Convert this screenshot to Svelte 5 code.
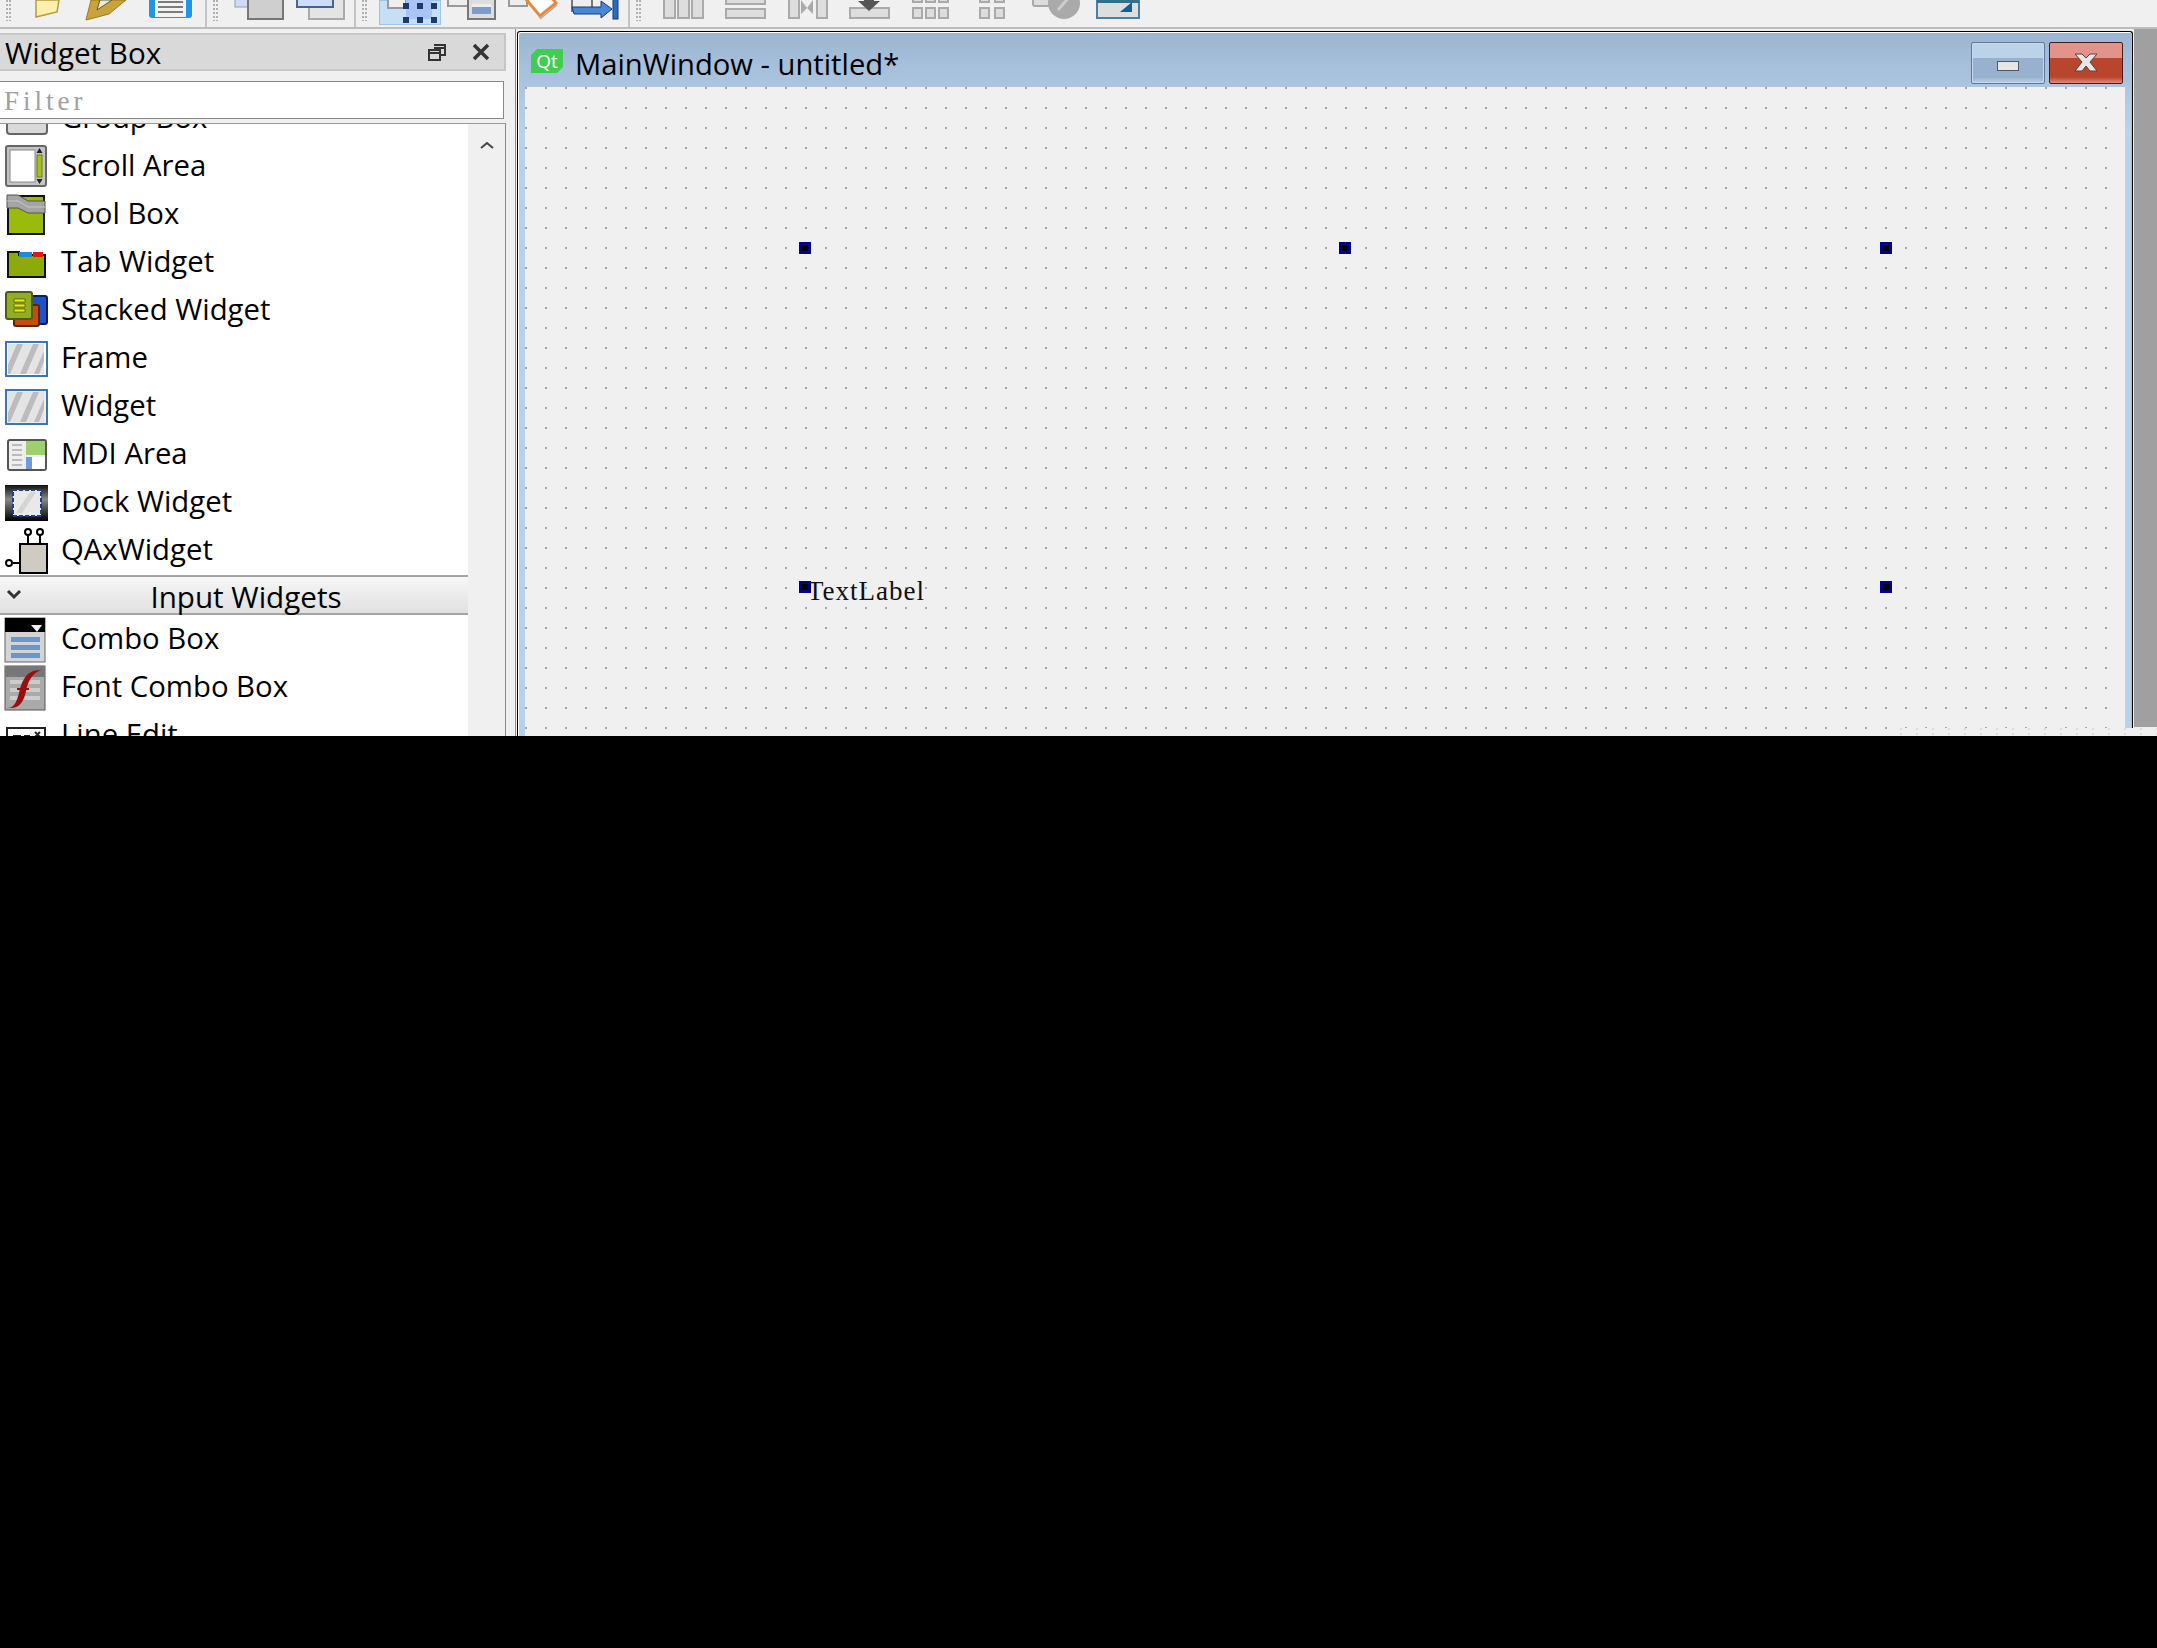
<script>
    const stripes = `<rect x="4" y="9" width="36" height="30" fill="#e4e4e4"/><path d="M4 30 13 9h6L6 39H4zM16 39 29 9h6L22 39zM30 39 40 16v10l-5 13z" fill="#bcbcbc"/>`;

    const icons = {
        group: `<rect x="3" y="14" width="40" height="25" rx="3" fill="#d9d9d9" stroke="#666" stroke-width="2"/>`,
        scroll: `<rect x="2" y="3" width="40" height="40" rx="2" fill="#c4c4c4" stroke="#666" stroke-width="2"/><rect x="6" y="7" width="25" height="32" fill="#fff" stroke="#888"/><rect x="33" y="12" width="5" height="22" fill="#a6c21a" stroke="#687c10"/><path d="M35.500 5 38.500 10h-6zM35.500 41 32.500 36h6z" fill="#222"/>`,
        tool: `<rect x="4" y="5" width="36" height="38" fill="#9aba0c" stroke="#111" stroke-width="2"/><path d="M3 4h11l10 6h17v12H24l-10-5H3z" fill="#a4a4a4" stroke="#555"/><path d="M3 10h11l10 6h17" fill="none" stroke="#c8c8c8"/>`,
        tab: `<path d="M4 13h11v3h26v22H4z" fill="#8cab0a" stroke="#111" stroke-width="2"/><rect x="15" y="13" width="13" height="5" fill="#1d8ad8"/><rect x="29" y="13" width="10" height="5" fill="#e01818"/>`,
        stacked: `<rect x="26" y="9" width="17" height="28" rx="2" fill="#1f52c8" stroke="#0b1f52" stroke-width="2"/><rect x="10" y="18" width="25" height="21" rx="2" fill="#c84a10" stroke="#5f2405" stroke-width="2"/><rect x="2" y="5" width="26" height="27" rx="2" fill="#92ad22" stroke="#4d5c10" stroke-width="2"/><path d="M10 12h11v3H10zm0 5h11v3H10zm0 5h11v3H10z" fill="#e4f000" stroke="#333" stroke-width=".6"/>`,
        frame: `<rect x="2" y="7" width="41" height="34" fill="#fff" stroke="#3b76b4" stroke-width="2"/>` + stripes,
        widget: `<rect x="2" y="7" width="41" height="34" fill="#eee" stroke="#3b76b4" stroke-width="2"/>` + stripes,
        mdi: `<rect x="4" y="9" width="38" height="30" rx="2" fill="#eee" stroke="#555" stroke-width="2"/><rect x="22" y="10" width="19" height="14" fill="#9fd06e"/><path d="M22 26h19v12H22z" fill="#fff"/><path d="M22 26h6v12h-6zm0 4h19" fill="#6f9ce0"/><path d="M8 14h10M8 19h10M8 24h10M8 29h10M8 34h10" stroke="#bbb" stroke-width="2"/>`,
        dock: `<defs><linearGradient id="dk" x1="0" y1="0" x2="0" y2="1"><stop offset="0" stop-color="#111"/><stop offset=".4" stop-color="#888"/><stop offset="1" stop-color="#000"/></linearGradient></defs><rect x="1" y="6" width="43" height="36" fill="url(#dk)"/><rect x="9" y="11" width="28" height="26" fill="#e9e9e9" stroke="#1b3f95" stroke-width="2" stroke-dasharray="4 2"/><path d="M12 34 26 13h6L18 34z" fill="#d4d4d4"/>`,
        qax: `<rect x="16" y="17" width="27" height="29" fill="#cfcbc2" stroke="#000" stroke-width="2"/><path d="M24 17V8M36 17V8M16 36H9" stroke="#000" stroke-width="2"/><circle cx="24" cy="5" r="3" fill="#fff" stroke="#000" stroke-width="2"/><circle cx="36" cy="5" r="3" fill="#fff" stroke="#000" stroke-width="2"/><circle cx="5" cy="36" r="3" fill="#fff" stroke="#000" stroke-width="2"/>`,
        combo: `<rect x="1" y="2" width="40" height="44" fill="#d4d4d4" stroke="#666"/><rect x="1" y="2" width="40" height="14" fill="#000"/><path d="M27 9h11l-5 7z" fill="#eee"/><rect x="7" y="21" width="29" height="5" fill="#6b96c8"/><rect x="7" y="29" width="29" height="5" fill="#6b96c8"/><rect x="7" y="37" width="29" height="5" fill="#6b96c8"/>`,
        font: `<rect x="1" y="2" width="40" height="44" fill="#aaa" stroke="#555"/><rect x="1" y="2" width="40" height="11" fill="#777"/><path d="M6 18h30M6 26h30M6 34h30" stroke="#ccc" stroke-width="4"/><path d="M3 43c6 2 9-3 12-14 3-12 7-23 21-23l3-1c-11 4-15 12-17 22-2 11-8 20-19 16z" fill="#970f0f"/><path d="M13 25h12" stroke="#970f0f" stroke-width="2"/>`,
        line: `<rect x="3" y="16" width="38" height="30" fill="#fff" stroke="#222" stroke-width="2"/><path d="M9 24h8M20 24h6M31 20l5 5m0-5-5 5" stroke="#222" stroke-width="2"/>`,
    };

    const tool = {
        newfile: `<path d="M20 0h23l-2 12-21 5z" fill="#fdf0ae" stroke="#b59a3c" stroke-width="1.500"/>`,
        open: `<path d="M8 20 13 0h35L31 14z" fill="#c9a33a" stroke="#9a7a20"/><path d="M19 10 22 0h12z" fill="#f3ecc8" stroke="#555"/>`,
        save: `<rect x="9" y="-6" width="43" height="24" rx="3" fill="#1e95e6"/><rect x="15" y="-6" width="31" height="23" fill="#f3f3f3"/><path d="M18 2h25M18 7h25M18 12h25" stroke="#555" stroke-width="1.500"/>`,
        back: `<rect x="7" y="-8" width="16" height="15" fill="#cfdcf5" stroke="#8aa0c8"/><rect x="20" y="-6" width="35" height="25" fill="#cfcfcf" stroke="#777" stroke-width="2"/>`,
        front: `<rect x="19" y="-6" width="35" height="25" fill="#e4e4e4" stroke="#aaa" stroke-width="2"/><rect x="7" y="-8" width="36" height="15" fill="#cfdcf8" stroke="#41669a" stroke-width="2"/>`,
        edit: `<rect x="9" y="-6" width="18" height="14" fill="#eee" stroke="#999" stroke-width="2"/><rect x="27" y="-6" width="26" height="25" fill="#a9c4f5"/><path d="M24 3h6v6h-6zM38 3h6v6h-6zM52 3h6v6h-6zM24 17h6v6h-6zM38 17h6v6h-6zM52 17h6v6h-6z" fill="#1b3a70"/>`,
        signal: `<rect x="7" y="-6" width="20" height="12" fill="#eee" stroke="#999" stroke-width="2"/><rect x="27" y="-6" width="27" height="25" fill="#ddd" stroke="#777" stroke-width="2"/><rect x="31" y="4" width="19" height="10" fill="#7e9cc8"/><rect x="31" y="4" width="19" height="3" fill="#eee"/>`,
        buddy: `<rect x="6" y="-6" width="18" height="12" fill="#eee" stroke="#999" stroke-width="2"/><path d="M22 -2 37 16 53 3 46 -6z" fill="#fff" stroke="#e58a3c" stroke-width="3"/><path d="M37 19 54 5" stroke="#aaa" stroke-width="1.500"/>`,
        tab: `<rect x="7" y="-6" width="20" height="17" fill="#eee" stroke="#777" stroke-width="2"/><path d="M7 7h29V1l11 8-11 9v-4H9z" fill="#4a86d6" stroke="#1b3a70"/><rect x="48" y="-4" width="5" height="23" fill="#2a6cc0" stroke="#1b3a70"/>`,
        hbox: `<path d="M12-6h11v24H12zM26-6h11v24H26zM40-6h11v24H40z" fill="#ddd" stroke="#aaa" stroke-width="2"/>`,
        vbox: `<rect x="12" y="-8" width="39" height="12" fill="#ddd" stroke="#aaa" stroke-width="2"/><rect x="12" y="9" width="39" height="9" fill="#ddd" stroke="#aaa" stroke-width="2"/>`,
        hsplit: `<path d="M13-6h10v24H13zM41-6h10v24H41z" fill="#ddd" stroke="#aaa" stroke-width="2"/><path d="M25 0l6 8 6-8v14l-6-6-6 6z" fill="#aaa"/>`,
        vsplit: `<rect x="12" y="8" width="39" height="10" fill="#ddd" stroke="#aaa" stroke-width="2"/><path d="M26-2h10v3h6l-11 10-11-10h6z" fill="#555"/>`,
        form: `<path d="M13-6h9v8h-9zM26-6h9v8h-9zM39-6h9v8h-9zM13 8h9v10h-9zM26 8h9v10h-9zM39 8h9v10h-9z" fill="#ddd" stroke="#aaa" stroke-width="2"/>`,
        grid: `<path d="M18-6h9v8h-9zM33-6h9v8h-9zM18 8h9v10h-9zM33 8h9v10h-9z" fill="#ddd" stroke="#aaa" stroke-width="2"/>`,
        brk: `<rect x="9" y="-6" width="24" height="12" rx="2" fill="#ddd" stroke="#aaa" stroke-width="2"/><circle cx="40" cy="3" r="16" fill="#aaa"/><path d="M34 10 46-4" stroke="#ccc" stroke-width="3"/>`,
        adjust: `<rect x="11" y="-8" width="42" height="26" fill="#ddd" stroke="#4a80a8" stroke-width="2"/><rect x="11" y="-8" width="42" height="11" fill="#2f6f92"/><path d="M34 12l12-10v10z" fill="#175f92"/>`,
    };

    const groups = [
        { pad: 16, width: 207, items: ["newfile", "open", "save"] },
        { pad: 21, width: 149, items: ["back", "front"] },
        { pad: 23, width: 274, active: "edit", items: ["edit", "signal", "buddy", "tab"] },
        { pad: 22, width: 0, items: ["hbox", "vbox", "hsplit", "vsplit", "form", "grid", "brk", "adjust"] },
    ];

    const beforeInputs = [
        ["group", "Group Box"],
        ["scroll", "Scroll Area"],
        ["tool", "Tool Box"],
        ["tab", "Tab Widget"],
        ["stacked", "Stacked Widget"],
        ["frame", "Frame"],
        ["widget", "Widget"],
        ["mdi", "MDI Area"],
        ["dock", "Dock Widget"],
        ["qax", "QAxWidget"],
    ];
    const inputs = [
        ["combo", "Combo Box"],
        ["font", "Font Combo Box"],
        ["line", "Line Edit"],
    ];

    // selection handles around the label, relative to the form
    const handles = [
        [274, 155], [814, 155], [1355, 155],
        [274, 494], [1355, 494],
    ];
</script>

<div class="screen">
    <div class="toolbar">
        {#each groups as g}
            <div class="tgroup" class:last={!g.width} style="width:{g.width ? g.width + 'px' : 'auto'};padding-left:{g.pad}px">
                <span class="grip"></span>
                {#each g.items as name}
                    <span class="slot" class:active={g.active === name}>
                        <svg width="62" height="27" viewBox="0 0 62 27">{@html tool[name]}</svg>
                    </span>
                {/each}
            </div>
        {/each}
    </div>

    <div class="main">
        <div class="dock">
            <div class="dock-title">
                <span class="dock-name">Widget Box</span>
                <svg class="dock-btn" width="20" height="20" viewBox="0 0 20 20">
                    <path d="M7 3h11v10h-4M2 8h11v10H2zM2 11h11M7 6h11" fill="none" stroke="#333" stroke-width="2" />
                </svg>
                <svg class="dock-btn close" width="20" height="20" viewBox="0 0 20 20">
                    <path d="M3 3 17 17M17 3 3 17" stroke="#333" stroke-width="3.500" />
                </svg>
            </div>
            <div class="filter">Filter</div>
            <div class="list-wrap">
                <div class="list">
                    <div class="scrolled">
                        {#each beforeInputs as [icon, label]}
                            <div class="row">
                                <svg class="ico" width="44" height="48" viewBox="0 0 44 48">{@html icons[icon]}</svg>
                                <span>{label}</span>
                            </div>
                        {/each}
                        <div class="cat">
                            <svg class="chev" width="16" height="12" viewBox="0 0 16 12">
                                <path d="M2 2 8 8 14 2" fill="none" stroke="#333" stroke-width="3" />
                            </svg>
                            <span>Input Widgets</span>
                        </div>
                        {#each inputs as [icon, label]}
                            <div class="row">
                                <svg class="ico" width="44" height="48" viewBox="0 0 44 48">{@html icons[icon]}</svg>
                                <span>{label}</span>
                            </div>
                        {/each}
                    </div>
                </div>
                <div class="vscroll">
                    <svg width="14" height="9" viewBox="0 0 14 9">
                        <path d="M1 7 7 2 13 7" fill="none" stroke="#444" stroke-width="2" />
                    </svg>
                </div>
            </div>
        </div>

        <div class="mdi">
            <div class="window">
                <div class="win-title">
                    <span class="qt">Qt</span>
                    <span class="win-name">MainWindow - untitled*</span>
                    <span class="wbtn min"><i></i></span>
                    <span class="wbtn cls">
                        <svg width="24" height="20" viewBox="0 0 24 20">
                            <path d="M1 1h7l4 4 4-4h7l-7 8 7 9h-7l-4-5-4 5H1l7-9z" fill="#e6e6e6" stroke="#5c4040" />
                        </svg>
                    </span>
                </div>
                <div class="form">
                    {#each handles as [x, y]}
                        <span class="handle" style="left:{x}px;top:{y}px"></span>
                    {/each}
                    <span class="label">TextLabel</span>
                </div>
            </div>
        </div>
    </div>
    <div class="band"></div>
</div>

<style>
    :global(body) {
        background: #000;
    }

    .screen {
        position: relative;
        height: 736px;
        overflow: hidden;
        display: flex;
        flex-direction: column;
        background: #f0f0f0;
        font-family: "Open Sans", "Noto Sans", sans-serif;
        color: #000;
    }

    /* strip of the screen below the window, right hand side only */
    .band {
        position: absolute;
        right: 0;
        bottom: 0;
        width: 257px;
        height: 8px;
        background-color: #f0f0f0;
        background-image: conic-gradient(at 2px 2px, transparent 75%, #dcdcdc 0);
        background-size: 16px 5px;
    }

    .toolbar {
        height: 27px;
        flex: none;
        display: flex;
        border-bottom: 2px solid #bcbcbc;
        overflow: hidden;
    }

    .tgroup {
        position: relative;
        display: flex;
        box-sizing: border-box;
        border-right: 2px solid #c4c4c4;
    }

    .tgroup.last {
        flex: 1;
        border-right: 0;
    }

    .grip {
        position: absolute;
        left: 6px;
        top: 0;
        bottom: 6px;
        width: 6px;
        background-image: radial-gradient(circle at 1px 1px, #b0b0b0 1px, transparent 1.2px);
        background-size: 3px 4px;
    }

    .slot {
        flex: none;
        width: 62px;
        height: 27px;
    }

    .slot svg {
        display: block;
    }

    .slot.active {
        box-sizing: border-box;
        height: 25px;
        background: #c7dff5;
        box-shadow: inset 0 0 0 1px #99c6ec;
    }

    .main {
        flex: 1;
        display: flex;
        min-height: 0;
    }

    .dock {
        width: 506px;
        flex: none;
        padding-top: 4px;
        box-sizing: border-box;
        display: flex;
        flex-direction: column;
    }

    .dock-title {
        height: 38px;
        box-sizing: border-box;
        flex: none;
        display: flex;
        align-items: center;
        background: #d9d9d9;
        border: 2px solid #c6c6c6;
        border-left: 0;
        padding-left: 5px;
        font-size: 29.600px;
    }

    .dock-name {
        flex: 1;
        padding-top: 1px;
    }

    .dock-btn {
        margin-right: 24px;
    }

    .dock-btn.close {
        margin-right: 13px;
    }

    .filter {
        height: 38px;
        box-sizing: border-box;
        flex: none;
        margin: 10px 2px 4px 0;
        padding-left: 4px;
        background: #fff;
        border: 1px solid #8a8a8a;
        border-left: 0;
        color: #a0a0a0;
        font: 27px/38px "Liberation Serif", serif;
        letter-spacing: 4px;
    }

    .list-wrap {
        flex: 1;
        min-height: 0;
        display: flex;
        border-top: 1px solid #9a9a9a;
        border-right: 1px solid #8a8a8a;
    }

    .list {
        width: 468px;
        flex: none;
        background: #fff;
        overflow: hidden;
    }

    .scrolled {
        margin-top: -29px;
    }

    .row {
        height: 48px;
        display: flex;
        align-items: center;
        gap: 13px;
        padding-left: 4px;
        font-size: 29.300px;
        white-space: nowrap;
    }

    .row span {
        padding-bottom: 4px;
    }

    .ico {
        flex: none;
        overflow: visible;
    }

    .cat {
        height: 40px;
        margin-bottom: 1px;
        box-sizing: border-box;
        display: flex;
        align-items: center;
        background: linear-gradient(#f7f7f7, #e0e0e0);
        border-top: 2px solid #a4a4a4;
        border-bottom: 2px solid #a4a4a4;
        font-size: 29.600px;
    }

    .chev {
        flex: none;
        margin: 0 2px 0 6px;
    }

    .cat span {
        flex: 1;
        text-align: center;
        padding-top: 2px;
    }

    .vscroll {
        flex: 1;
        display: flex;
        justify-content: center;
        padding-top: 17px;
    }

    .mdi {
        flex: 1;
        min-width: 0;
        margin-left: 9px;
        border-left: 1px solid #8a8a8a;
        padding-left: 1px;
        background: linear-gradient(#a0a0a0 698px, #f0f0f0 0) no-repeat 1618px 0 / 100% 100%;
        display: flex;
    }

    .window {
        width: 1616px;
        flex: none;
        margin-top: 2px;
        box-sizing: border-box;
        display: flex;
        flex-direction: column;
        border: 1px solid #000;
        border-bottom: 0;
        border-radius: 3px 3px 0 0;
        padding: 0 7px 0 7px;
        background: linear-gradient(#9bb5d2, #bdd4ea 105px, #b9d1ea 105px);
        box-shadow: inset 1px 1px 0 #fff, inset -1px 0 0 #7fd0f0;
    }

    .win-title {
        height: 55px;
        flex: none;
        display: flex;
        align-items: center;
        font-size: 29.200px;
    }

    .qt {
        width: 32px;
        height: 24px;
        margin: 3px 12px 0 6px;
        background: #41cd52;
        color: #fff;
        font-size: 19px;
        line-height: 24px;
        text-align: center;
        clip-path: polygon(6px 0, 100% 0, 100% calc(100% - 6px), calc(100% - 6px) 100%, 0 100%, 0 6px);
    }

    .win-name {
        flex: 1;
        margin-top: 8px;
    }

    .wbtn {
        width: 74px;
        height: 42px;
        box-sizing: border-box;
        display: flex;
        align-items: center;
        justify-content: center;
        border-radius: 2px;
        margin-top: 6px;
    }

    .min {
        margin-right: 4px;
        border: 1px solid #5d7a9c;
        background: linear-gradient(#bcd2e8 37%, #98b1ce 37%, #98b1ce 85%, #bcd0e6);
        box-shadow: inset 0 0 0 1px #c8d9ec;
    }

    .min i {
        width: 22px;
        height: 10px;
        box-sizing: border-box;
        margin-top: 6px;
        background: #e6e6e6;
        border: 1px solid #505a68;
    }

    .cls {
        margin-right: 2px;
        border: 1px solid #4d1a1a;
        background: linear-gradient(#e3948a 37%, #b8452c 37%, #b8452c 85%, #de8a7c);
    }

    .form {
        flex: 1;
        min-height: 0;
        position: relative;
        background-color: #f0f0f0;
        background-image: conic-gradient(at 2px 2px, transparent 75%, #a2a2a2 0);
        background-size: 20px 20px;
    }

    .handle {
        position: absolute;
        z-index: 1;
        width: 12px;
        height: 12px;
        box-sizing: border-box;
        background: #000;
        border: 3px solid #00008b;
    }

    .label {
        position: absolute;
        left: 282px;
        top: 488px;
        font: 27px/32px "Liberation Serif", serif;
        letter-spacing: 1px;
        color: #111;
    }
</style>
